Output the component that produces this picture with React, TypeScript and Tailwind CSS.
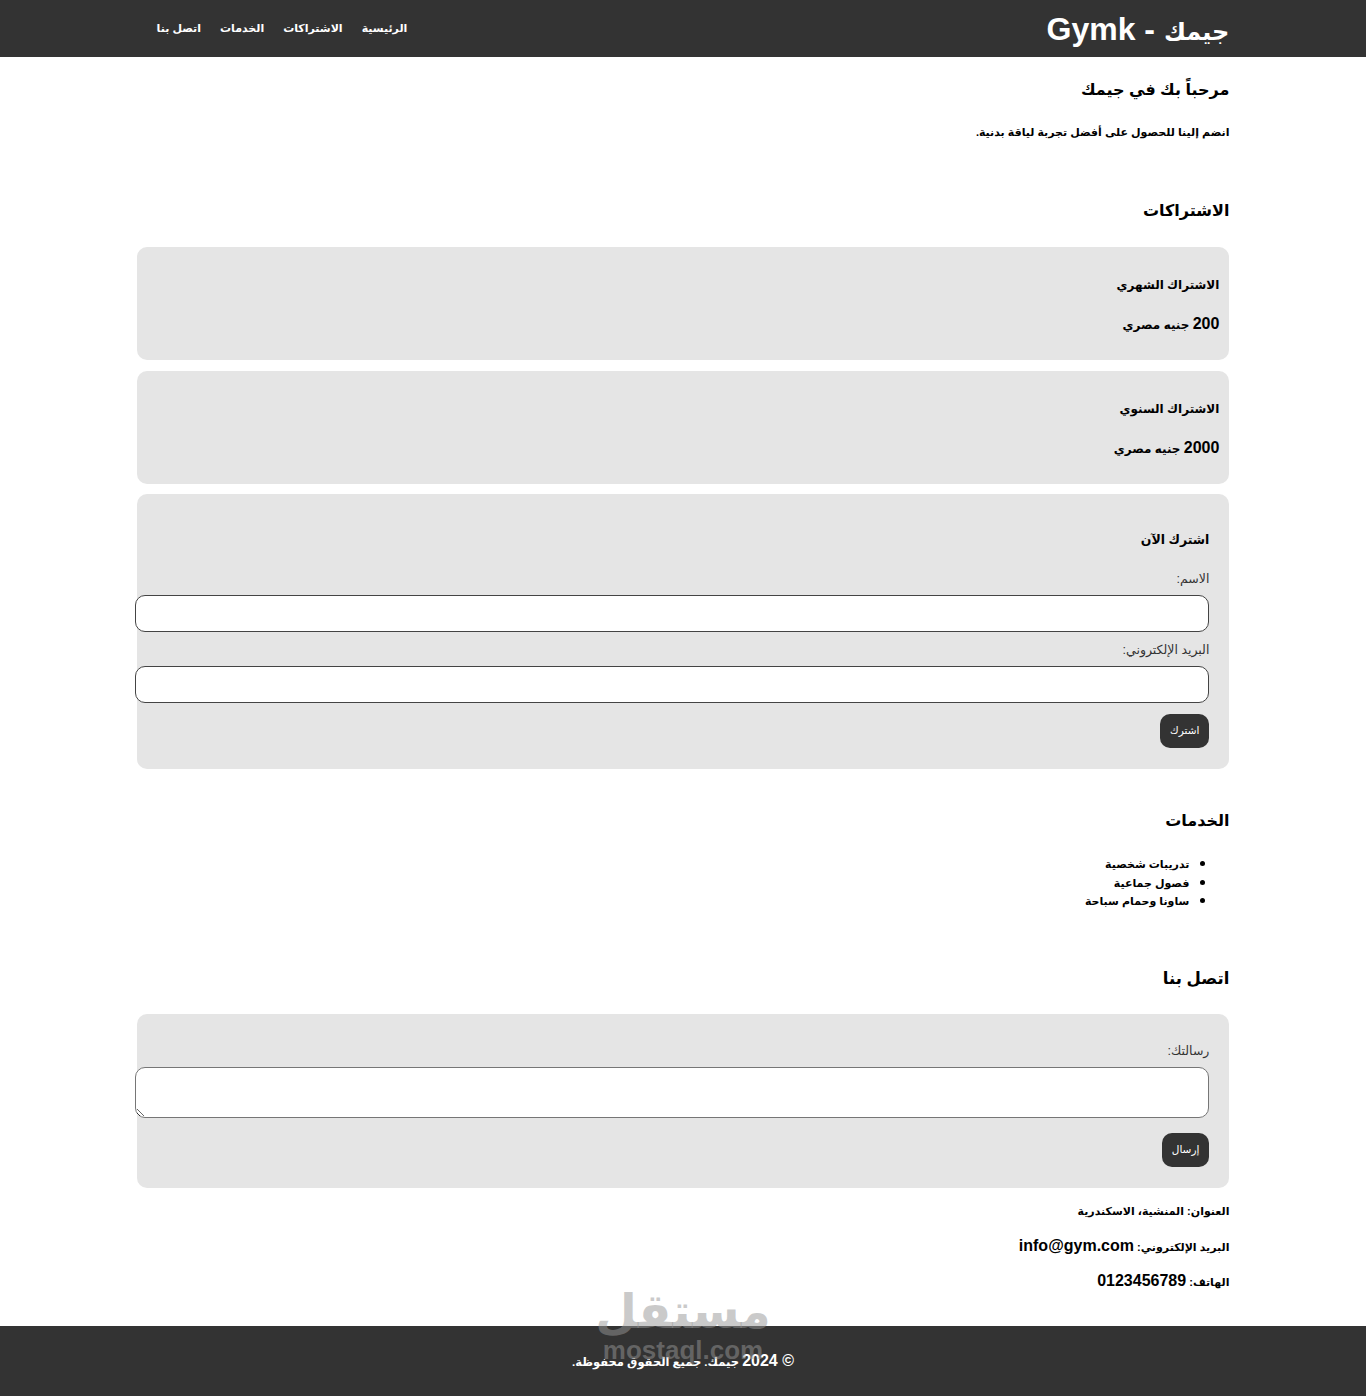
import React from 'react';

const font = "font-['Liberation_Sans','DejaVu_Sans',sans-serif]";

const plans = [
  { name: 'الاشتراك الشهري', amount: '200', unit: 'جنيه مصري' },
  { name: 'الاشتراك السنوي', amount: '2000', unit: 'جنيه مصري' },
];

const services = ['تدريبات شخصية', 'فصول جماعية', 'ساونا وحمام سباحة'];

const navLinks = ['الرئيسية', 'الاشتراكات', 'الخدمات', 'اتصل بنا'];

export default function App() {
  return (
    <div dir="rtl" className={`${font} relative min-h-[1396px] bg-white text-black`}>
      {/* Header */}
      <header className="h-[57px] bg-[#333333] text-white">
        <div className="mx-auto flex h-full w-[80%] items-center justify-between">
          <h1 className="h-[36px] text-[32px] font-bold leading-[36px]">
            <span className="text-[24px]">جيمك</span> - Gymk
          </h1>
          <nav>
            <ul className="flex gap-[19px] pl-[20px] text-[11px] font-bold">
              {navLinks.map(link => (
                <li key={link}>
                  <a href="#" className="text-white">{link}</a>
                </li>
              ))}
            </ul>
          </nav>
        </div>
      </header>

      <main className="mx-auto w-[80%]">
        {/* Hero */}
        <section className="pt-[21px]">
          <h2 className="text-[16px] font-bold leading-[24px]">مرحباً بك في جيمك</h2>
          <p className="mt-[21px] text-[11px] font-bold leading-[18px]">انضم إلينا للحصول على أفضل تجربة لياقة بدنية.</p>
        </section>

        {/* Subscriptions */}
        <section className="mt-[58px]">
          <h2 className="text-[16px] font-bold leading-[24px]">الاشتراكات</h2>
          <div className="mt-[24px] flex flex-col gap-[10.5px]">
            {plans.map(plan => (
              <div key={plan.name} className="rounded-[10px] bg-[#e5e5e5] px-[10px] pb-[26px] pt-[29px]">
                <h3 className="h-[18px] text-[12px] font-bold leading-[18px]">{plan.name}</h3>
                <p className="mt-[20px] h-[20px] text-[12px] font-bold leading-[20px]">
                  <span className="text-[16px]">{plan.amount}</span> {plan.unit}
                </p>
              </div>
            ))}

            <div className="rounded-[10px] bg-[#e5e5e5] px-[20px] pb-[21px] pt-[37px]">
              <h3 className="h-[18px] text-[12.5px] font-bold leading-[18px]">اشترك الآن</h3>
              <form className="mt-[22px] flex flex-col items-start" onSubmit={e => e.preventDefault()}>
                <label className="h-[16px] text-[12.5px] leading-[16px] text-[#333]">الاسم:</label>
                <input type="text" className="mt-[8px] box-content h-[15px] w-full rounded-[10px] border border-[#444] bg-white px-[10px] py-[10px]" />
                <label className="mt-[10px] h-[16px] text-[12.5px] leading-[16px] text-[#333]">البريد الإلكتروني:</label>
                <input type="email" className="mt-[8px] box-content h-[15px] w-full rounded-[10px] border border-[#444] bg-white px-[10px] py-[10px]" />
                <button type="submit" className="mt-[11px] h-[34px] rounded-[10px] bg-[#333333] px-[10px] text-[10.5px] text-white">اشترك</button>
              </form>
            </div>
          </div>
        </section>

        {/* Services */}
        <section className="mt-[40px]">
          <h2 className="text-[16px] font-bold leading-[24px]">الخدمات</h2>
          <ul className="mt-[21px] list-disc pr-[40px] text-[11px] font-bold leading-[18.5px] marker:text-[15px]">
            {services.map(s => (
              <li key={s} className="h-[18.5px]">{s}</li>
            ))}
          </ul>
        </section>

        {/* Contact */}
        <section className="mt-[56px]">
          <h2 className="text-[16.5px] font-bold leading-[24px]">اتصل بنا</h2>
          <div className="mt-[24px] rounded-[10px] bg-[#e5e5e5] px-[20px] pb-[21px] pt-[29px]">
            <form className="flex flex-col items-start" onSubmit={e => e.preventDefault()}>
              <label className="h-[16px] text-[12.5px] leading-[16px] text-[#333]">رسالتك:</label>
              <textarea className="mt-[8px] box-content h-[29px] w-full rounded-[10px] border border-[#767676] bg-white px-[10px] py-[10px]" />
              <button type="submit" className="mt-[15px] h-[34px] rounded-[10px] bg-[#333333] px-[10px] text-[10.5px] text-white">إرسال</button>
            </form>
          </div>
          <div className="mt-[13px] flex flex-col gap-[15px] pb-[35px] text-[11px] font-bold leading-[20px]">
            <p className="h-[20px]">العنوان: المنشية، الاسكندرية</p>
            <p className="h-[20px]">البريد الإلكتروني: <span className="text-[16px]">info@gym.com</span></p>
            <p className="h-[20px]">الهاتف: <span className="text-[16px]">0123456789</span></p>
          </div>
        </section>
      </main>

      {/* Footer */}
      <footer className="flex h-[70px] items-center justify-center bg-[#333333] text-[11.5px] font-bold text-white">
        <p className="h-[20px] leading-[20px]"><span className="text-[16px]">© 2024</span> جيمك. جميع الحقوق محفوظة.</p>
      </footer>

      {/* Watermark */}
      <div className="pointer-events-none absolute left-[683px] top-[1286px] flex -translate-x-1/2 flex-col items-center text-[rgba(150,150,150,0.5)]">
        <span className="text-[48px] font-bold leading-[52px]">مستقل</span>
        <span dir="ltr" className="text-[26px] font-bold leading-[24px]">mostaql.com</span>
      </div>
    </div>
  );
}
